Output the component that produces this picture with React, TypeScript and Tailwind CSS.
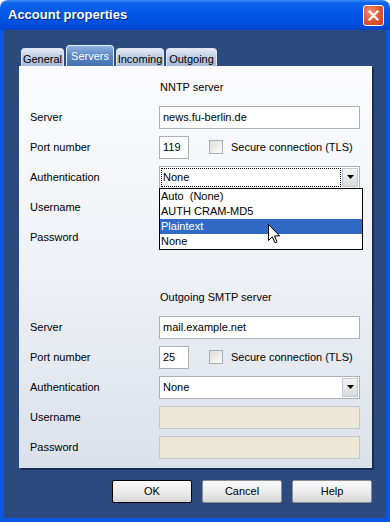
import React from 'react';

const labelCls = 'w-[129px] shrink-0 text-[11px] text-black';

function Row({ label, children }: { label: string; children: React.ReactNode }) {
  return (
    <div className="flex items-center h-[22px]">
      <span className={labelCls}>{label}</span>
      {children}
    </div>
  );
}

function TextBox({ value, disabled }: { value?: string; disabled?: boolean }) {
  return (
    <div
      className={
        disabled
          ? 'h-[23px] flex-1 border border-[#c4c8cd] bg-[#ebe8d8]'
          : 'h-[23px] flex-1 border border-[#aab0b8] bg-white flex items-center px-[3px] text-[11px] text-black'
      }
    >
      {value}
    </div>
  );
}

function PortRow({ port }: { port: string }) {
  return (
    <Row label="Port number">
      <div className="h-[23px] w-[30px] border border-[#aab0b8] bg-white flex items-center px-[3px] text-[11px]">
        {port}
      </div>
      <div className="ml-[20px] w-[14px] h-[14px] border border-[#a8aeb6] bg-[linear-gradient(135deg,#dedfd8,#fbfbf9)]" />
      <span className="ml-[8px] text-[11px] text-black">Secure connection (TLS)</span>
    </Row>
  );
}

function Combo({ focused, open }: { focused?: boolean; open?: boolean }) {
  return (
    <div className="relative flex-1 h-[23px] border border-[#aab0b8] bg-white flex p-[1px]">
      <div
        className={
          focused
            ? 'flex-1 flex items-center border border-dotted border-black px-[1px] text-[11px] mr-[1px]'
            : 'flex-1 flex items-center px-[2px] text-[11px] mr-[1px]'
        }
      >
        None
      </div>
      <div className="w-[16px] border border-[#c2c6cc] bg-[linear-gradient(to_bottom,#f4f4f4,#d9dbde)] flex items-center justify-center">
        <svg width="7" height="4" viewBox="0 0 7 4">
          <path d="M0 0h7L3.5 4z" fill="#000" />
        </svg>
      </div>
      {open && (
        <div className="absolute left-[-1px] top-[21px] w-[204px] border border-black bg-white z-10 text-[11px]">
          <div className="h-[15px] px-[1px] flex items-center">Auto&nbsp;&nbsp;(None)</div>
          <div className="h-[15px] px-[1px] flex items-center">AUTH CRAM-MD5</div>
          <div className="h-[15px] px-[1px] flex items-center bg-[#316ac5] text-white">Plaintext</div>
          <div className="h-[15px] px-[1px] flex items-center">None</div>
          <svg className="absolute left-[108px] top-[35px]" width="12" height="20" viewBox="0 0 12 20">
            <path
              d="M0.5 0.5v16l3.8-3.7 2.6 6 2.2-1-2.6-5.9h5.2z"
              fill="#fff"
              stroke="#000"
              strokeWidth="1"
              strokeLinejoin="miter"
            />
          </svg>
        </div>
      )}
    </div>
  );
}

function Tab({ label, width, active }: { label: string; width: string; active?: boolean }) {
  return (
    <div
      className={
        active
          ? `${width} h-[21px] rounded-t-[4px] border border-b-0 border-[#e8eef8] bg-[linear-gradient(to_bottom,#8fb1e0,#5a86c4_50%,#4570b0)] text-white text-[11px] flex items-start justify-center pt-[2px]`
          : `${width} h-[18px] rounded-t-[4px] border border-b-0 border-[#dfe6f1] bg-[linear-gradient(to_bottom,#e3eaf5,#bccbe2_50%,#a7b9d6)] text-black text-[11px] flex items-start justify-center pt-[2px]`
      }
    >
      {label}
    </div>
  );
}

function Button({ label, def }: { label: string; def?: boolean }) {
  return (
    <div
      className={
        def
          ? 'w-[80px] h-[23px] rounded-[2px] border border-black bg-[linear-gradient(to_bottom,#fbfbfb,#e9e9e9_60%,#d6d6d6)] flex items-center justify-center text-[11px] text-black'
          : 'w-[80px] h-[23px] rounded-[2px] border border-[#8a8d92] bg-[linear-gradient(to_bottom,#fbfbfb,#e9e9e9_60%,#d6d6d6)] flex items-center justify-center text-[11px] text-black'
      }
    >
      {label}
    </div>
  );
}

export default function App() {
  return (
    <div className="w-[390px] h-[522px] bg-white font-['Liberation_Sans',Arial,sans-serif]">
      <div className="w-full h-full flex flex-col rounded-t-[8px] overflow-hidden">
        {/* title bar */}
        <div className="h-[30px] shrink-0 flex items-center pl-[8px] pr-[6px] bg-[linear-gradient(to_bottom,#3d8df8_0%,#0c62ea_10%,#0058e8_45%,#004fdf_80%,#0043cc_100%)]">
          <span className="flex-1 text-white font-bold text-[13px] [text-shadow:1px_1px_0_#0a2478]">
            Account properties
          </span>
          <div className="w-[21px] h-[21px] rounded-[3px] border border-white bg-[radial-gradient(circle_at_35%_30%,#f0906e,#e0552e_55%,#c23c17)] flex items-center justify-center">
            <svg width="11" height="11" viewBox="0 0 11 11">
              <path d="M1.5 1.5l8 8M9.5 1.5l-8 8" stroke="#fff" strokeWidth="2.2" strokeLinecap="square" />
            </svg>
          </div>
        </div>

        {/* body */}
        <div className="flex-1 flex flex-col border-x-4 border-b-4 border-[#0a56e6] bg-[repeating-linear-gradient(to_bottom,#2f4f83_0px,#2f4f83_1px,#28467a_1px,#28467a_2px)] pt-[15px] pl-[15px] pr-[14px]">
          <div className="flex items-end gap-[2px] pl-[2px] h-[21px]">
            <Tab label="General" width="w-[43px]" />
            <Tab label="Servers" width="w-[48px]" active />
            <Tab label="Incoming" width="w-[48px]" />
            <Tab label="Outgoing" width="w-[51px]" />
          </div>

          <div className="h-[402px] flex flex-col gap-[8px] pt-[10px] pl-[11px] pr-[12px] bg-[linear-gradient(to_bottom,#fcfcfe,#eef1f6_50%,#dbe1ea)] shadow-[2px_2px_0_rgba(10,20,50,0.55)]">
            <div className="h-[22px] flex items-center pl-[130px] text-[11px]">NNTP server</div>
            <Row label="Server">
              <TextBox value="news.fu-berlin.de" />
            </Row>
            <PortRow port="119" />
            <Row label="Authentication">
              <Combo focused open />
            </Row>
            <Row label="Username">
              <TextBox disabled />
            </Row>
            <Row label="Password">
              <TextBox disabled />
            </Row>

            <div className="mt-[30px] h-[22px] flex items-center pl-[130px] text-[11px]">Outgoing SMTP server</div>
            <Row label="Server">
              <TextBox value="mail.example.net" />
            </Row>
            <PortRow port="25" />
            <Row label="Authentication">
              <Combo />
            </Row>
            <Row label="Username">
              <TextBox disabled />
            </Row>
            <Row label="Password">
              <TextBox disabled />
            </Row>
          </div>

          <div className="mt-[12px] flex justify-end gap-[10px]">
            <Button label="OK" def />
            <Button label="Cancel" />
            <Button label="Help" />
          </div>
        </div>
      </div>
    </div>
  );
}
